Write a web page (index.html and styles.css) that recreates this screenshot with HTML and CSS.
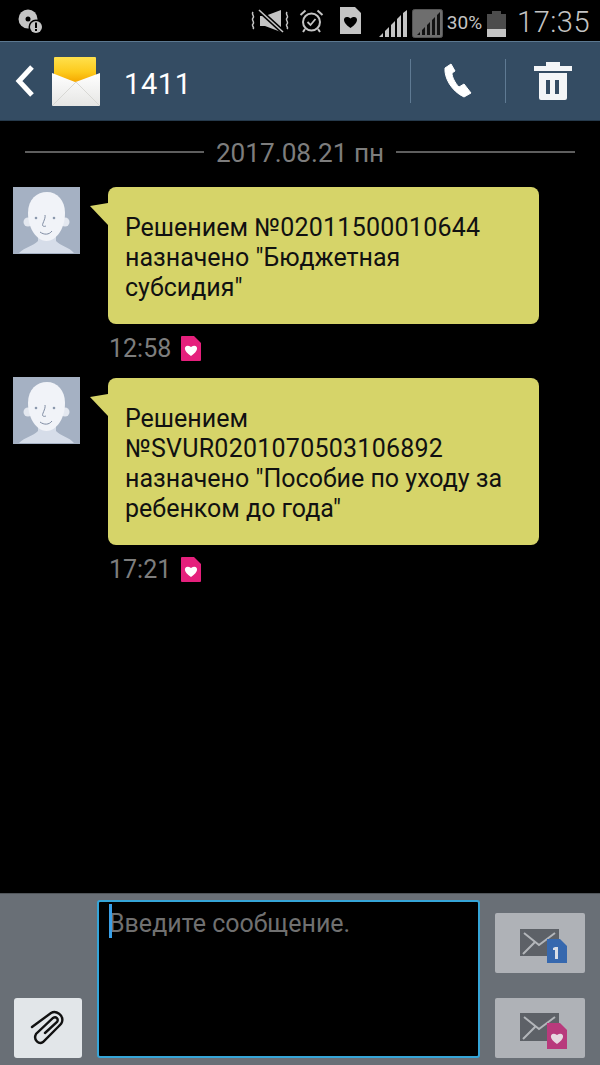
FILE: index.html
```html
<!DOCTYPE html>
<html lang="ru">
<head>
    <meta charset="UTF-8">
    <title>1411</title>
    <link rel="stylesheet" href="styles.css">
</head>
<body>
    <div class="page">
        <!-- STATUS BAR -->
        <div class="status">
            <svg class="st_alert" width="26" height="26" viewBox="0 0 26 26">
                <circle cx="11" cy="10" r="9.5" fill="#c4c4c4"/>
                <circle cx="11" cy="10" r="2.5" fill="#000"/>
                <circle cx="19" cy="18" r="7.5" fill="#000"/>
                <circle cx="19" cy="18" r="6" fill="#c4c4c4"/>
                <rect x="18" y="13.5" width="2" height="5.5" fill="#000"/>
                <rect x="18" y="20" width="2" height="2" fill="#000"/>
            </svg>
            <div class="status_right">
                <svg class="st_mute" width="38" height="24" viewBox="0 0 38 24">
                    <path d="M9 7h5L30 1v22L14 17H9z" fill="#c4c4c4"/>
                    <path d="M8 1l24 22" stroke="#000" stroke-width="4.500"/>
                    <path d="M8 1l24 22" stroke="#c4c4c4" stroke-width="1.600"/>
                    <path d="M2 3c-2 3 2 4 0 6s2 4 0 6 2 3 0 5M36 3c-2 3 2 4 0 6s2 4 0 6 2 3 0 5" fill="none" stroke="#c4c4c4" stroke-width="1.500"/>
                </svg>
                <svg class="st_alarm" width="25" height="24" viewBox="0 0 25 24">
                    <circle cx="12.500" cy="13" r="8.500" fill="none" stroke="#c4c4c4" stroke-width="2"/>
                    <path d="M8.500 13l3 3 5-6" fill="none" stroke="#c4c4c4" stroke-width="1.800"/>
                    <path d="M1.500 6l5-4.500M23.500 6l-5-4.500M6 20l-2 3M19 20l2 3" stroke="#c4c4c4" stroke-width="2"/>
                </svg>
                <svg class="st_sim" width="21" height="27" viewBox="0 0 21 27">
                    <path d="M0 0h15l6 6v21H0z" fill="#c4c4c4"/>
                    <path d="M10.500 21c-11-7-6-14 0-9.500 6-4.500 11 2.500 0 9.500z" fill="#000"/>
                </svg>
                <svg class="st_signal" width="28" height="27" viewBox="0 0 28 27">
                    <path d="M0 27l4-4v4zM6 27v-6l4-4v10zM12 27V15l4-4v16zM18 27V9l4-4v22zM24 27V3l4-3v27z" fill="#c4c4c4"/>
                </svg>
                <svg class="st_signal2" width="31" height="29" viewBox="0 0 31 29">
                    <rect x="0.500" y="0.500" width="30" height="28" rx="2" fill="#6e6e6e" stroke="#555"/>
                    <path d="M5 26l3-3v3zM10 26v-5l3-3v8zM15 26V16l3-3v13zM20 26V11l3-3v18zM25 26V6l3-3v23z" fill="#111"/>
                </svg>
                <span class="st_pct">30%</span>
                <div class="st_batt"><div class="st_batt_fill"></div></div>
                <span class="st_time">17:35</span>
            </div>
        </div>

        <!-- APP BAR -->
        <div class="appbar">
            <svg class="back" width="20" height="32" viewBox="0 0 20 32">
                <path d="M17 2L4 16l13 14" fill="none" stroke="#fff" stroke-width="5"/>
            </svg>
            <svg class="logo" width="50" height="50" viewBox="0 0 50 50">
                <defs>
                    <linearGradient id="env" x1="0" y1="0" x2="0" y2="1">
                        <stop offset="0" stop-color="#ffffff"/>
                        <stop offset="1" stop-color="#e6e6e4"/>
                    </linearGradient>
                    <linearGradient id="flap" x1="0" y1="0" x2="0" y2="1">
                        <stop offset="0" stop-color="#ffe14d"/>
                        <stop offset="0.6" stop-color="#fdca1c"/>
                        <stop offset="1" stop-color="#f5a800"/>
                    </linearGradient>
                </defs>
                <path d="M3 0h40a1 1 0 0 1 1 1v24H2V1a1 1 0 0 1 1-1z" fill="url(#flap)"/>
                <path d="M0 16l23 9 2-.500 23-8.500v32a1 1 0 0 1-1 1H1a1 1 0 0 1-1-1z" fill="url(#env)"/>
                <path d="M1 48l23-23 23 23" fill="none" stroke="#d8d8d4" stroke-width="1"/>
            </svg>
            <div class="title">1411</div>
            <div class="vl"></div>
            <div class="bar_btn">
                <svg width="30" height="36" viewBox="0 0 30 36">
                    <path d="M8 1L2 5c-1 9 6 23 19 29l7-4-7-9-5 3C12 20 9 14 9 10l3-2z" fill="#fff" stroke="#fff" stroke-linejoin="round"/>
                </svg>
            </div>
            <div class="vl"></div>
            <div class="bar_btn">
                <svg width="38" height="38" viewBox="0 0 38 38">
                    <path d="M0 4h12V0h14v4h12v5H0zM5 11h28v25a2 2 0 0 1-2 2H7a2 2 0 0 1-2-2zM12 18v14h4V18zM21 18v14h4V18z" fill="#f3f5f7" fill-rule="evenodd"/>
                </svg>
            </div>
        </div>

        <!-- MESSAGES -->
        <div class="thread">
            <div class="date_row">
                <div class="date_line"></div>
                <span class="date_txt">2017.08.21 пн</span>
                <div class="date_line"></div>
            </div>

            <div class="msg">
                <svg class="avatar" width="67" height="67" viewBox="0 0 67 67">
                    <defs>
                        <g id="face">
                            <rect width="67" height="67" fill="#a5b1c3"/>
                            <path d="M6 66c6-6 14-7 19-12v-8h18v8c5 5 13 6 18 12z" fill="#d6dde9"/>
                            <circle cx="15" cy="35" r="4.500" fill="#e4e8f0"/>
                            <circle cx="52" cy="35" r="4.500" fill="#e4e8f0"/>
                            <path d="M15 26C15 12 24 5 34 5s18 8 18 21c0 16-9 28-18.500 28S15 42 15 26z" fill="#f1f3f8"/>
                            <circle cx="23" cy="31" r="1.300" fill="#8b98ad"/>
                            <circle cx="41" cy="31" r="1.300" fill="#8b98ad"/>
                            <path d="M32 28c1 4-4 10-2 11 1 .6 2 .4 3 0M27 45c4 3 9 3 12-1" fill="none" stroke="#7f8ca3" stroke-width="1"/>
                        </g>
                        <g id="sim">
                            <path d="M1 0h12l7 7v17a1 1 0 0 1-1 1H1a1 1 0 0 1-1-1V1a1 1 0 0 1 1-1z" fill="#e5207c"/>
                            <path d="M10 20c-10-6-6-13 0-9 6-4 10 3 0 9z" fill="#fff"/>
                        </g>
                    </defs>
                    <use href="#face"/>
                </svg>
                <div class="msg_body">
                    <div class="bubble">Решением <span class="num">№02011500010644</span><br>назначено "Бюджетная<br>субсидия"</div>
                    <div class="msg_info">
                        <span class="msg_time">12:58</span>
                        <svg class="sim_pink" width="20" height="25" viewBox="0 0 20 25">
                            <use href="#sim"/>
                        </svg>
                    </div>
                </div>
            </div>

            <div class="msg msg_second">
                <svg class="avatar" width="67" height="67" viewBox="0 0 67 67">
                    <use href="#face"/>
                </svg>
                <div class="msg_body">
                    <div class="bubble">Решением<br><span class="num">№SVUR0201070503106892</span><br>назначено "Пособие по уходу за<br>ребенком до года"</div>
                    <div class="msg_info">
                        <span class="msg_time">17:21</span>
                        <svg class="sim_pink" width="20" height="25" viewBox="0 0 20 25">
                            <use href="#sim"/>
                        </svg>
                    </div>
                </div>
            </div>
        </div>

        <!-- INPUT -->
        <div class="composer">
            <div class="attach">
                <svg width="36" height="38" viewBox="0 0 36 38">
                    <path d="M2 18L21 4c5-3 13 2 11 9-.5 2-2 3-3 4L13 33c-4 3-10-2-7-8L23 9c3-2 6 1 4 4L15 24" fill="none" stroke="#111" stroke-width="2.400" stroke-linecap="round"/>
                </svg>
            </div>
            <div class="input_box">
                <div class="caret"></div>
                <span class="placeholder">Введите сообщение.</span>
            </div>
            <div class="send_col">
                <div class="send_btn">
                    <svg class="send_icon" width="47" height="34" viewBox="0 0 47 34">
                        <rect x="0" y="0" width="39" height="27" fill="#5d6167"/>
                        <path d="M4 4l15 12 16-12M3 25l12-12" fill="none" stroke="#b3b6ba" stroke-width="2"/>
                        <path d="M27 10h13l7 7v17H27z" fill="#3668ae"/>
                        <path d="M35 18h3v12h-3v-9h-2v-2z" fill="#d8dde6"/>
                    </svg>
                </div>
                <div class="send_btn">
                    <svg class="send_icon" width="47" height="36" viewBox="0 0 47 36">
                        <rect x="0" y="0" width="39" height="28" fill="#5d6167"/>
                        <path d="M4 4l15 12 16-12M3 26l12-12" fill="none" stroke="#b3b6ba" stroke-width="2"/>
                        <path d="M27 10h13l7 7v19H27z" fill="#b83a7c"/>
                        <path d="M37 31c-10-6-6-13 0-9 6-4 10 3 0 9z" fill="#e6d9e0"/>
                    </svg>
                </div>
            </div>
        </div>
    </div>
</body>
</html>
```

FILE: styles.css
```css
* {
    box-sizing: border-box;
}
body {
    margin: 0;
    background-color: #000;
    font-family: Roboto, "Liberation Sans", sans-serif;
}
svg {
    display: block;
    flex: none;
}
.page {
    width: 600px;
    height: 1065px;
    display: flex;
    flex-direction: column;
    overflow: hidden;
}

/*  STATUS BAR  */
.status {
    height: 41px;
    display: flex;
    align-items: center;
    justify-content: space-between;
    padding: 0 10px 0 17px;
    color: #c4c4c4;
}
.status_right {
    display: flex;
    align-items: center;
}
.st_alert {
    margin-top: 2px;
}
.st_mute {
    margin-right: 10px;
}
.st_alarm {
    margin-right: 16px;
}
.st_sim {
    margin-right: 18px;
}
.st_signal {
    margin-right: 5px;
    margin-top: 6px;
}
.st_signal2 {
    margin-right: 4px;
    margin-top: 5px;
}
.st_pct {
    font-size: 19px;
    margin-top: 3px;
    margin-right: 5px;
}
.st_batt {
    width: 19px;
    height: 23px;
    margin-top: 9px;
    margin-right: 11px;
    position: relative;
    background-color: #4c4c4c;
    display: flex;
    align-items: flex-end;
}
.st_batt::before {
    content: "";
    position: absolute;
    left: 5px;
    top: -3px;
    width: 9px;
    height: 3px;
    background-color: #4c4c4c;
}
.st_batt_fill {
    width: 100%;
    height: 8px;
    background-color: #c4c4c4;
}
.st_time {
    font-size: 29px;
    font-weight: 300;
    letter-spacing: 0.5px;
    margin-top: 2px;
}

/*  APP BAR  */
.appbar {
    height: 80px;
    display: flex;
    align-items: center;
    background-color: #344c63;
    border-top: 1px solid #5c7890;
    border-bottom: 1px solid #263a4c;
    padding-left: 15px;
}
.back {
    margin-right: 17px;
}
.logo {
    margin-top: 2px;
}
.title {
    flex: 1;
    margin-left: 22px;
    margin-top: 6px;
    color: #fff;
    font-size: 29px;
    letter-spacing: 0.6px;
}
.vl {
    width: 1px;
    height: 44px;
    background-color: #5f7a93;
}
.bar_btn {
    width: 94px;
    display: flex;
    justify-content: center;
    align-items: center;
}

/*  MESSAGES  */
.thread {
    flex: 1;
    padding: 0 13px;
}
.date_row {
    display: flex;
    align-items: center;
    height: 62px;
    padding: 0 12px;
    margin-bottom: 4px;
}
.date_line {
    flex: 1;
    height: 2px;
    background-color: #5e5e5e;
}
.date_txt {
    margin: 1px 12px 0;
    font-size: 26.2px;
    color: #7d7d7d;
}
.msg {
    display: flex;
    align-items: flex-start;
}
.msg_second {
    margin-top: 16px;
}
.avatar {
    margin-right: 28px;
}
.msg_body {
    flex: none;
    width: 431px;
}
.msg_second .msg_body {
    margin-top: 1px;
}
.bubble {
    position: relative;
    padding: 26px 17px 21px;
    background-color: #d6d469;
    border-radius: 8px;
    color: #111;
    font-size: 25px;
    line-height: 30px;
}
.bubble::before {
    content: "";
    position: absolute;
    left: -18px;
    top: 16px;
    width: 18px;
    height: 22px;
    background-color: #d6d469;
    clip-path: polygon(0 3px, 100% 0, 100% 100%);
}
.num {
    letter-spacing: 0.25px;
}
.msg_info {
    display: flex;
    align-items: center;
    height: 25px;
    margin-top: 12px;
    margin-left: 1px;
}
.msg_time {
    margin-right: 10px;
    font-size: 25px;
    color: #7d7d7d;
}

/*  INPUT  */
.composer {
    height: 172px;
    display: flex;
    align-items: flex-end;
    padding: 7px 15px 7px 14px;
    background-color: #696f76;
    border-top: 1px solid #50555a;
}
.attach {
    width: 68px;
    height: 60px;
    margin-right: 15px;
    display: flex;
    align-items: center;
    justify-content: center;
    background-color: #e2e6e9;
    border-radius: 3px;
}
.input_box {
    width: 383px;
    height: 158px;
    margin-right: 15px;
    padding: 7px 10px;
    display: flex;
    align-items: flex-start;
    position: relative;
    background-color: #000;
    border: 2px solid #35a5d8;
    border-radius: 3px;
}
.caret {
    position: absolute;
    left: 10px;
    top: 2px;
    width: 3px;
    height: 34px;
    background-color: #3aa0e8;
}
.placeholder {
    font-size: 25px;
    color: #707070;
}
.send_col {
    display: flex;
    flex-direction: column;
    gap: 25px;
}
.send_btn {
    width: 90px;
    height: 60px;
    display: flex;
    align-items: center;
    justify-content: center;
    background-color: #afb2b7;
    border-radius: 2px;
}
.send_icon {
    margin-left: 7px;
    margin-top: 6px;
}
```
